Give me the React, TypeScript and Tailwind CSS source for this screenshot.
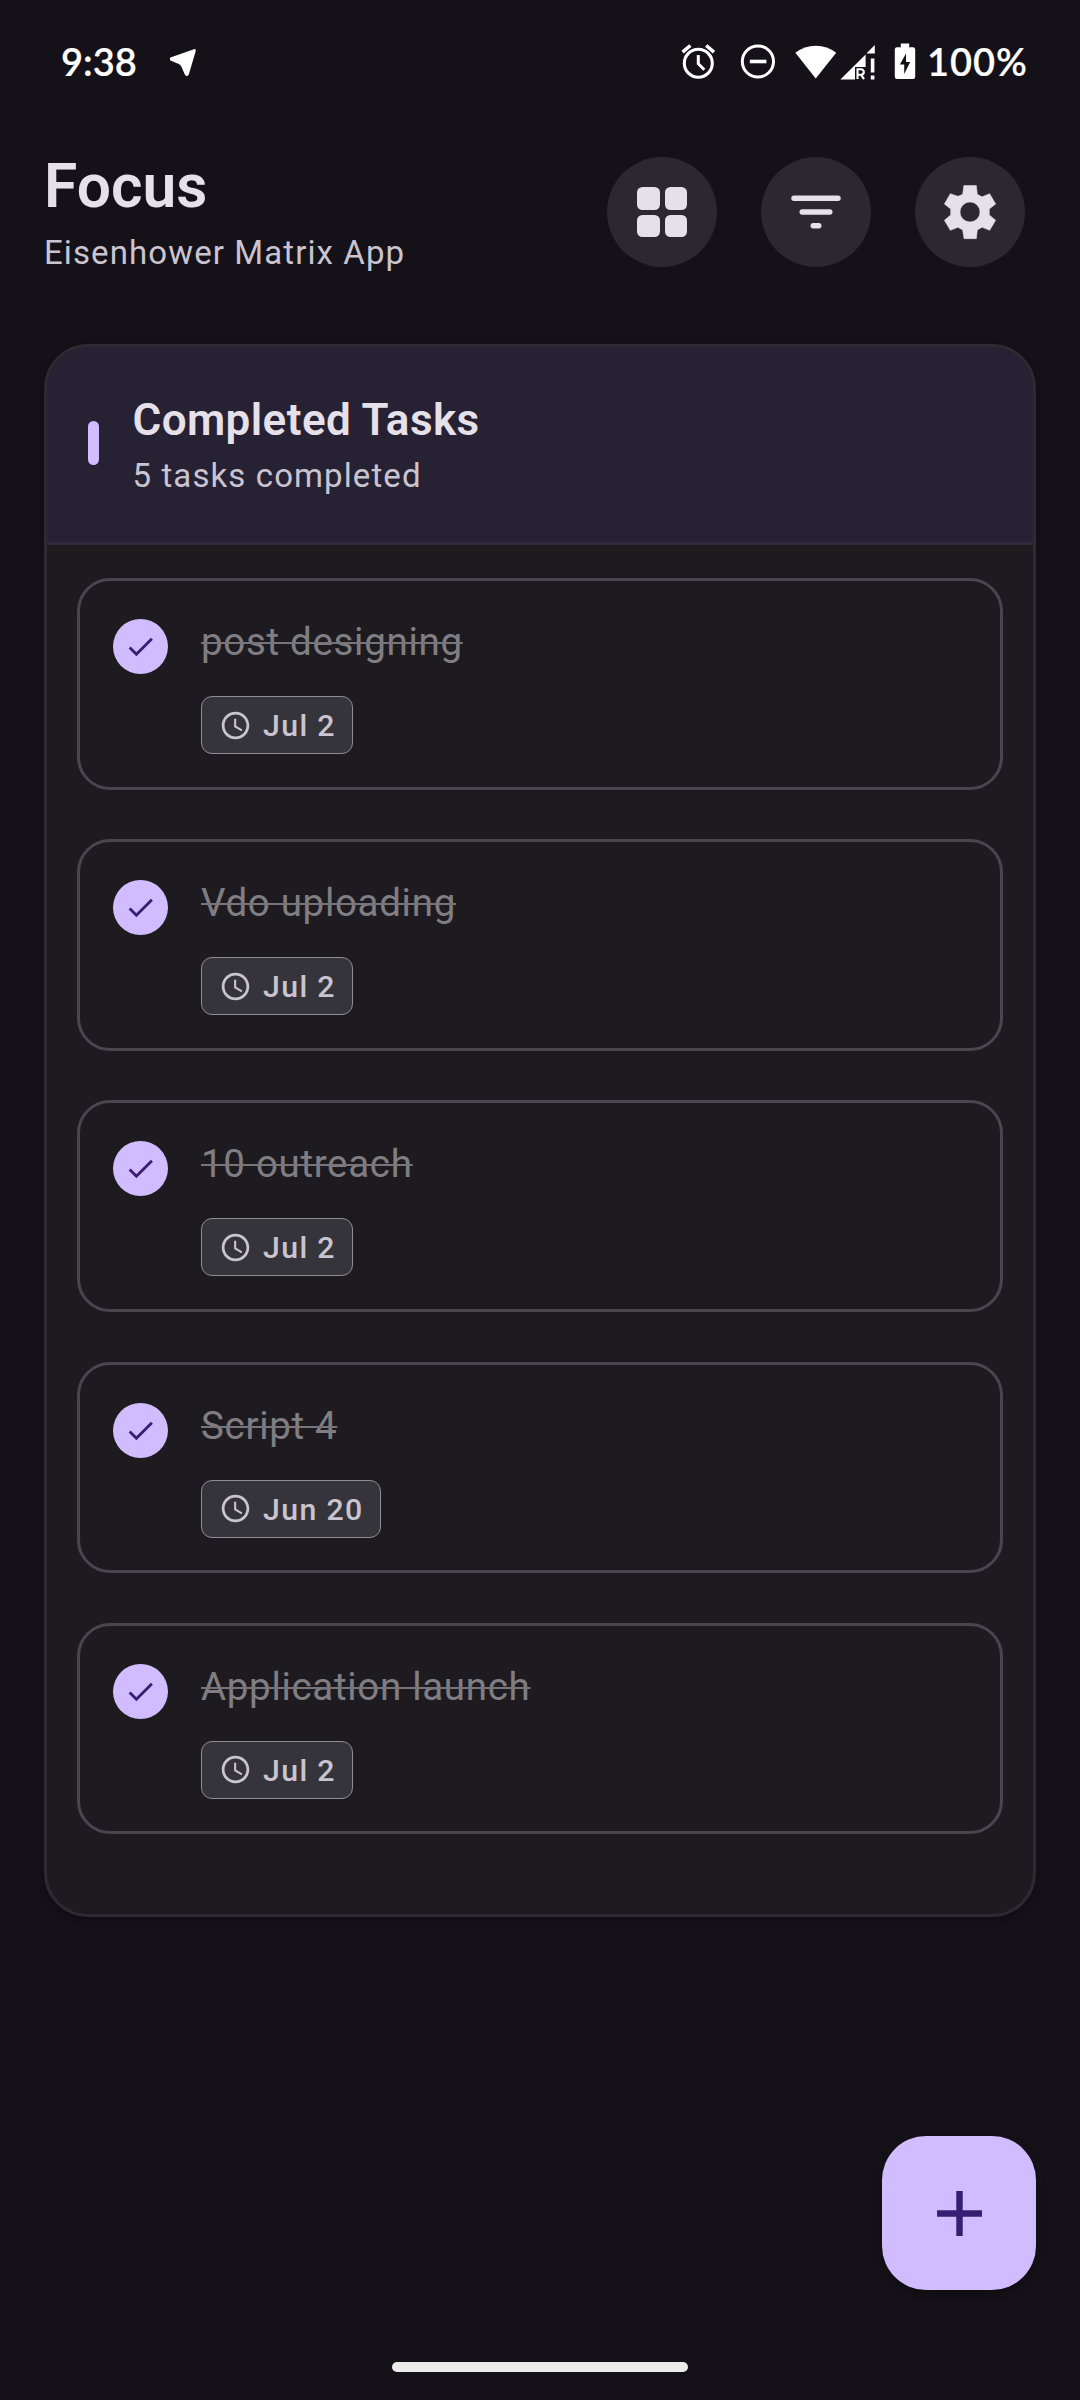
import React from "react";
import { MdAdd, MdCheck, MdSchedule } from "react-icons/md";

const tasks = [
  { title: "post designing", date: "Jul 2" },
  { title: "Vdo uploading", date: "Jul 2" },
  { title: "10 outreach", date: "Jul 2" },
  { title: "Script 4", date: "Jun 20" },
  { title: "Application launch", date: "Jul 2" },
];

function StatusBar() {
  return (
    <div className="flex h-[124px] items-center pl-[61px] pr-[53px] font-['Lato',sans-serif] text-[38px] font-semibold leading-none text-white">
      <span className="w-[72px] whitespace-nowrap pb-[2px] [-webkit-text-stroke:0.2px_#fff]">9:38</span>
      <svg className="ml-[37px] mt-[2px] h-[30px] w-[30px]" viewBox="0 0 30 30" fill="#fff">
        <path d="M.4 9.5 L24 1.2 Q26.1 .6 25.6 3.4 L18.8 26.5 Q17 29.6 14.8 26.5 L11.2 18.3 Q10.4 16.8 8.8 15.9 L.4 12.4 Q-2 10.8 .4 9.5Z" />
      </svg>
      <div className="ml-auto flex items-center">
        <svg className="h-[38px] w-[38px]" viewBox="0 0 38 38" fill="none" stroke="#fff" strokeWidth="3.1">
          <circle cx="19.3" cy="20.2" r="14" />
          <path d="M19.3 12v8.7l6 6" strokeWidth="3" />
          <path d="M3.6 9.1 11.4 2.5M27.2 2.5 35 9.1" strokeWidth="3.6" />
        </svg>
        <svg className="ml-[22px] h-[38px] w-[38px]" viewBox="0 0 38 38" fill="none" stroke="#fff" strokeWidth="3">
          <circle cx="18.9" cy="18.5" r="15.6" />
          <path d="M10.8 18.5h16.6" strokeWidth="3.6" />
        </svg>
        <svg className="ml-[18px] h-[38px] w-[42px]" viewBox="0 0 42 38" fill="#fff">
          <path d="M.4 9.7A33 33 0 0 1 41.2 9.7L20.7 35.6Z" />
        </svg>
        <svg className="ml-[3px] h-[38px] w-[36px]" viewBox="0 0 36 38" fill="#fff">
          <path d="M34.8 2v8.6h-8.4Z" />
          <path d="M25.6 11.4V24H15v12.4H.4Z" />
          <path d="M17.5 36V26.3h3.6a2.4 2.4 0 0 1 0 5.4h-3.6M21 31.7l3 4.5" fill="none" stroke="#fff" strokeWidth="2.1" />
          <path d="M30.8 15.5h3.6v14h-3.6zM30.8 32.6h3.6v3.8h-3.6z" />
        </svg>
        <svg className="ml-[18px] h-[38px] w-[22px]" viewBox="0 0 22 38">
          <path d="M6.8 .6h8.4v3.7H19a2.2 2.2 0 0 1 2.2 2.2v27.3a2.2 2.2 0 0 1-2.2 2.2H3a2.2 2.2 0 0 1-2.2-2.2V6.5A2.2 2.2 0 0 1 3 4.3h3.8Z" fill="#fff" />
          <path d="M12 10.5v8.5h4.2L10.2 31v-9.4H5.9Z" fill="#141218" />
        </svg>
        <span className="ml-[11px] w-[100px] whitespace-nowrap pb-[2px] tracking-[1px] [-webkit-text-stroke:0.2px_#fff]">100%</span>
      </div>
    </div>
  );
}

function IconButton({ children, label }: { children: React.ReactNode; label: string }) {
  return (
    <button aria-label={label} className="flex h-[110px] w-[110px] items-center justify-center rounded-full bg-[#2b292f] text-[#e6e0e9]">
      {children}
    </button>
  );
}

function Header() {
  return (
    <header className="flex h-[150px] items-start justify-between pl-[44px] pr-[55px] pt-[24px]">
      <div>
        <h1 className="text-[60.5px] font-semibold leading-[77px] text-[#e6e0e9]">Focus</h1>
        <p className="mt-[6px] text-[33px] leading-[44px] tracking-[1.1px] text-[#cac4d0]">Eisenhower Matrix App</p>
      </div>
      <div className="mt-[9px] flex gap-[44px]">
        <IconButton label="Matrix">
          <div className="grid grid-cols-2 gap-[5px]">
            <i className="h-[22.5px] w-[22.5px] rounded-[5.5px] bg-[#e6e0e9]" />
            <i className="h-[22.5px] w-[22.5px] rounded-[5.5px] bg-[#e6e0e9]" />
            <i className="h-[22.5px] w-[22.5px] rounded-[5.5px] bg-[#e6e0e9]" />
            <i className="h-[22.5px] w-[22.5px] rounded-[5.5px] bg-[#e6e0e9]" />
          </div>
        </IconButton>
        <IconButton label="Filter">
          <svg className="h-[66px] w-[66px]" viewBox="0 0 24 24" stroke="#e6e0e9" strokeWidth="2" strokeLinecap="round">
            <path d="M4 7h16M7 12h10M11 17h2" />
          </svg>
        </IconButton>
        <IconButton label="Settings">
          <svg className="h-[66px] w-[66px]" viewBox="0 0 198 198" fill="#e6e0e9" fillRule="evenodd">
            <path d="M80.5 19.5H118L121 46 135 53.5 158 44 176 75 157 90V108L176 124 158 154 135 145 121 153 118 179H81L77 153 63 145 40 154 22 124 41 108V90L22 75 40 44 63 52 77 46ZM99 69a30 30 0 1 0 0 60a30 30 0 1 0 0-60Z" stroke="#e6e0e9" strokeWidth="1.5" strokeLinejoin="round" />
          </svg>
        </IconButton>
      </div>
    </header>
  );
}

function TaskCard({ title, date }: { title: string; date: string }) {
  return (
    <li className="flex h-[211.5px] rounded-[33px] border-[3px] border-[#49464d] pl-[33px] pt-[33px]">
      <span className="mt-[5px] flex h-[55px] w-[55px] items-center justify-center rounded-full bg-[#d0bcff]">
        <MdCheck className="h-[33px] w-[33px] text-[#381e72]" />
      </span>
      <div className="ml-[33px] flex flex-col items-start">
        <span className="text-[38.5px] leading-[55px] tracking-[0.69px] text-[#807e83] line-through decoration-[#77757a] decoration-[2px]">{title}</span>
        <span className="mt-[27px] flex h-[58px] items-center rounded-[11px] border border-[#8f8d93] bg-[#36343b] pl-[17px] pr-[16px] text-[#cac4d0]">
          <MdSchedule className="h-[33px] w-[33px]" />
          <span className="ml-[11px] whitespace-nowrap pt-[2px] text-[30.25px] font-medium leading-[44px] tracking-[1.375px]">{date}</span>
        </span>
      </div>
    </li>
  );
}

export default function App() {
  return (
    <div className="relative h-[2400px] w-[1080px] overflow-hidden bg-[#141218] font-['Roboto',sans-serif]">
      <StatusBar />
      <Header />
      <section className="mx-[44px] mt-[70px] h-[1573px] overflow-hidden rounded-[44px] border-[3px] border-[#2d2b31] bg-[#1d1b20] shadow-[0_3px_8px_rgba(0,0,0,0.3)]">
        <div className="-mx-[3px] -mt-[3px] flex h-[201px] items-center rounded-t-[44px] border-[3px] border-[#302b3c] bg-[#272134] pb-[4px] pl-[41px]">
          <span className="h-[44px] w-[11px] rounded-[5.5px] bg-[#d0bcff]" />
          <div className="ml-[33.5px]">
            <h2 className="-mt-px mb-px text-[44px] font-semibold leading-[66px] tracking-[0.41px] text-[#e6e0e9]">Completed Tasks</h2>
            <p className="text-[33px] leading-[44px] tracking-[1.1px] text-[#cac4d0]">5 tasks completed</p>
          </div>
        </div>
        <ul className="mx-[30px] mt-[33px] flex flex-col gap-[49.7px]">
          {tasks.map((t) => (
            <TaskCard key={t.title} {...t} />
          ))}
        </ul>
      </section>
      <button aria-label="Add task" className="absolute bottom-[110px] right-[44px] flex h-[154px] w-[154px] items-center justify-center rounded-[44px] bg-[#d0bcff] text-[#381e72] shadow-[0_4px_10px_rgba(0,0,0,0.3)]">
        <MdAdd className="h-[77px] w-[77px]" />
      </button>
      <div className="absolute bottom-[28px] left-[392px] h-[10px] w-[296px] rounded-full bg-[#ececec]" />
    </div>
  );
}
